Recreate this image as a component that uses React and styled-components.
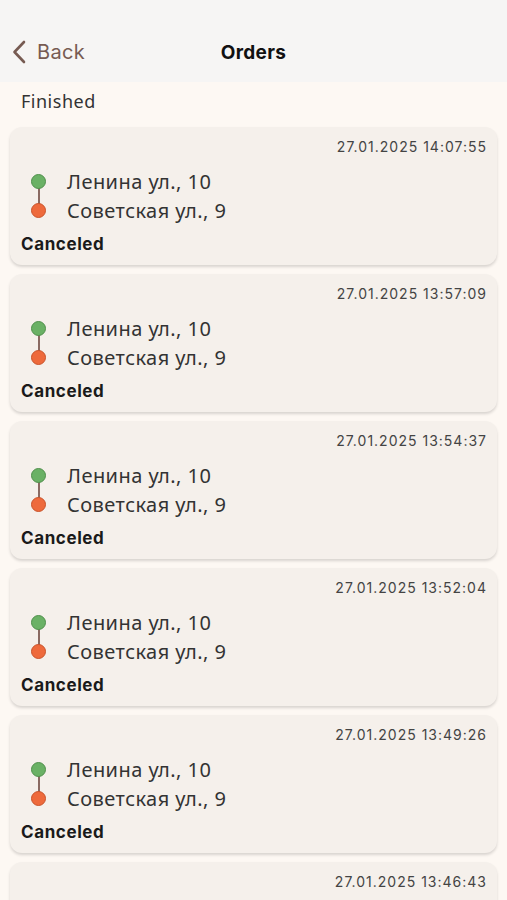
import React from "react";
import styled, { createGlobalStyle } from "styled-components";

const Global = createGlobalStyle`
  body {
    margin: 0;
    background: #fdf8f3;
    font-family: "Noto Sans", "Liberation Sans", sans-serif;
  }
`;

const Page = styled.div`
  width: 507px;
  height: 900px;
  overflow: hidden;
  background: #fdf8f3;
`;

const Header = styled.div`
  height: 82px;
  background: #f6f5f4;
  display: grid;
  grid-template-columns: 1fr auto 1fr;
  align-items: center;
  padding-top: 22px;
  box-sizing: border-box;
`;

const BackButton = styled.div`
  display: flex;
  align-items: center;
  gap: 11px;
  padding-left: 12px;
  color: #775b52;
  font-size: 20px;
  letter-spacing: 0.3px;
  font-family: "Inter", "Noto Sans", sans-serif;
`;

const Title = styled.div`
  font-family: "Inter", "Noto Sans", sans-serif;
  font-weight: 700;
  font-size: 19px;
  letter-spacing: 0.3px;
  color: #111;
`;

const Section = styled.div`
  font-size: 18px;
  color: #333;
  padding: 7px 0 0 21px;
  height: 38px;
  letter-spacing: 0.5px;
`;

const List = styled.div`
  display: flex;
  flex-direction: column;
  gap: 9px;
  padding: 0 10px;
`;

const Card = styled.div`
  height: 138px;
  box-sizing: border-box;
  background: #f5f0eb;
  border-radius: 12px;
  box-shadow: 0 2px 3px rgba(0, 0, 0, 0.15);
  padding: 11px 10px 0 11px;
  display: flex;
  flex-direction: column;
  flex-shrink: 0;
`;

const Stamp = styled.div`
  align-self: flex-end;
  font-family: "Inter", "Noto Sans", sans-serif;
  font-size: 14px;
  color: #444;
  letter-spacing: 1px;
`;

const Route = styled.div`
  display: grid;
  grid-template-columns: 46px 1fr;
  row-gap: 4px;
  margin-top: 14px;
  position: relative;
`;

const Dot = styled.div`
  width: 15px;
  height: 15px;
  border-radius: 50%;
  background: ${(p) => p.$color};
  box-sizing: border-box;
  border: 1px solid ${(p) => p.$edge};
  margin-left: 10px;
  align-self: center;
  position: relative;
  z-index: 1;
`;

const Line = styled.div`
  position: absolute;
  left: 16.5px;
  top: 13px;
  width: 2px;
  height: 28px;
  background: #8a6a62;
`;

const Address = styled.div`
  font-size: 20px;
  color: #333;
  line-height: 25px;
  letter-spacing: 0.45px;
`;

const Status = styled.div`
  margin-top: 11px;
  font-weight: 700;
  font-size: 17px;
  letter-spacing: 0.6px;
  color: #1a1a1a;
  font-family: "Inter", "Noto Sans", sans-serif;
`;

const stamps = [
  "27.01.2025 14:07:55",
  "27.01.2025 13:57:09",
  "27.01.2025 13:54:37",
  "27.01.2025 13:52:04",
  "27.01.2025 13:49:26",
  "27.01.2025 13:46:43",
];

export default function App() {
  return (
    <Page>
      <Global />
      <Header>
        <BackButton>
          <svg width="14" height="24" viewBox="0 0 14 24">
            <path d="M12 2 L2.5 12 L12 22" fill="none" stroke="#775b52" strokeWidth="2.6" strokeLinecap="round" strokeLinejoin="round" />
          </svg>
          Back
        </BackButton>
        <Title>Orders</Title>
        <div />
      </Header>
      <Section>Finished</Section>
      <List>
        {stamps.map((s) => (
          <Card key={s}>
            <Stamp>{s}</Stamp>
            <Route>
              <Line />
              <Dot $color="#6ab165" $edge="#4f8f4b" />
              <Address>Ленина ул., 10</Address>
              <Dot $color="#ee6a3c" $edge="#c9532a" />
              <Address>Советская ул., 9</Address>
            </Route>
            <Status>Canceled</Status>
          </Card>
        ))}
      </List>
    </Page>
  );
}
